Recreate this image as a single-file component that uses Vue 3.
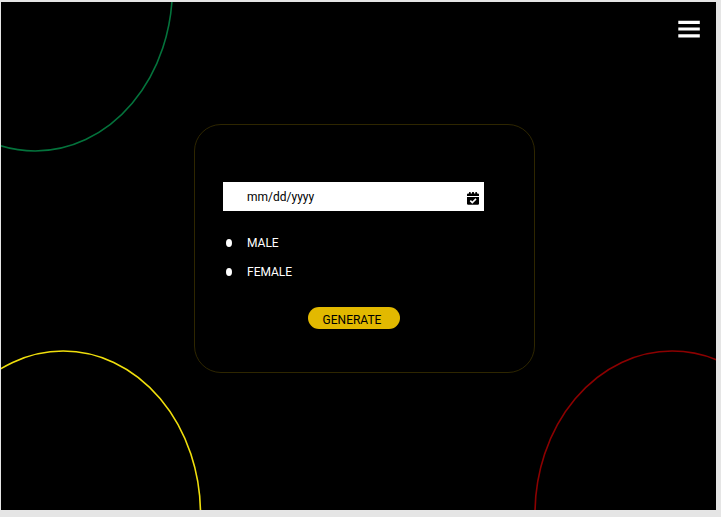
<script setup>
import { ref } from 'vue'

const birthDate = ref('')
const gender = ref('')
</script>

<template>
  <div class="page">
    <div class="stage">
      <svg class="ring ring-green" viewBox="0 0 173 150" aria-hidden="true">
        <ellipse cx="34.2" cy="-14" rx="137.2" ry="163" />
      </svg>
      <svg class="ring ring-yellow" viewBox="0 0 201 160" aria-hidden="true">
        <ellipse cx="62.2" cy="164" rx="137.3" ry="163" />
      </svg>
      <svg class="ring ring-red" viewBox="0 0 182 160" aria-hidden="true">
        <ellipse cx="138.2" cy="164" rx="137.2" ry="163" />
      </svg>

      <header class="topbar">
        <button class="menu" type="button" aria-label="Menu">
          <svg viewBox="0 0 22 18" aria-hidden="true">
            <path d="M.3 2.400h21.500M.3 9h21.500M.3 15.800h21.500" />
          </svg>
        </button>
      </header>

      <main class="content">
        <form class="card" @submit.prevent>
          <div class="date-field">
            <input v-model="birthDate" type="text" placeholder="mm/dd/yyyy" aria-label="Date of birth" />
            <button class="picker" type="button" aria-label="Choose date">
              <svg viewBox="0 0 12 13" aria-hidden="true">
                <path d="M2 1.4V.6Q2 0 2.600 0h.5q.6 0 .6.6v.8H5V.6Q5 0 5.600 0h.8Q7 0 7 .6v.8h1.300V.6q0-.6.6-.6h.5q.6 0 .6.6v.8h.8q1.200 0 1.200 1.200v1.500H0V2.600q0-1.200 1.200-1.200z" />
                <path d="M0 5h12v6.600q0 1.200-1.200 1.200H1.200Q0 12.800 0 11.600z" />
                <path class="tick" d="M3.300 8.600l2 2 3.700-3.700" />
              </svg>
            </button>
          </div>
          <div class="options">
            <label><input v-model="gender" type="radio" name="gender" value="male" />MALE</label>
            <label><input v-model="gender" type="radio" name="gender" value="female" />FEMALE</label>
          </div>
          <button class="generate" type="submit">GENERATE</button>
        </form>
      </main>
    </div>
  </div>
</template>

<style>
body {
  margin: 0;
  background: #e5e5e5;
}
</style>

<style scoped>
.page {
  box-sizing: border-box;
  display: flex;
  min-height: 100vh;
  padding: 2px 5px 7px 1px;
  background: #e5e5e5;
  font-family: Roboto, "Liberation Sans", sans-serif;
  font-size: 12px;
  line-height: 16px;
}

.stage {
  position: relative;
  flex: 1;
  overflow: hidden;
  background: #000;
}

.ring {
  position: absolute;
  fill: none;
  stroke-width: 1.6;
}

.ring-green {
  top: 0;
  left: 0;
  width: 173px;
  stroke: #04733c;
}

.ring-yellow {
  bottom: 0;
  left: 0;
  width: 201px;
  stroke: #f0df0c;
}

.ring-red {
  right: 0;
  bottom: 0;
  width: 182px;
  stroke: #8c0000;
}

button {
  padding: 0;
  border: 0;
  background: none;
  font: inherit;
  cursor: pointer;
}

.topbar {
  position: relative;
  display: flex;
  justify-content: flex-end;
  padding: 18px 16px 0;
}

.menu svg {
  display: block;
  width: 22px;
  height: 18px;
  stroke: #fff;
  stroke-width: 3.2;
}

.content {
  position: relative;
  display: flex;
  justify-content: center;
  padding: 86px 0 24px 12px;
}

.card {
  box-sizing: border-box;
  display: flex;
  flex-direction: column;
  width: 100%;
  max-width: 341px;
  padding: 57px 50px 43px 28px;
  border: 1px solid #2e2600;
  border-radius: 27px;
}

.date-field {
  display: flex;
  align-items: center;
  height: 29px;
  padding: 0 5px 0 24px;
  background: #fff;
}

.date-field input {
  flex: 1;
  min-width: 0;
  padding: 0;
  border: 0;
  outline: 0;
  background: none;
  color: #000;
  font: inherit;
}

.date-field input::placeholder {
  color: #000;
  opacity: 1;
}

.picker {
  padding-top: 3px;
}

.picker svg {
  display: block;
  width: 12px;
  height: 13px;
}

.tick {
  fill: none;
  stroke: #fff;
  stroke-width: 1.6;
}

.options {
  display: flex;
  flex-direction: column;
  padding: 17px 0 21px 3px;
}

.options label {
  display: flex;
  align-items: center;
  gap: 15px;
  height: 29px;
  color: #fff;
}

.options input {
  appearance: none;
  width: 6px;
  height: 8px;
  margin: 0;
  border-radius: 50%;
  background: #fff;
}

.generate {
  align-self: center;
  width: 92px;
  height: 22px;
  padding: 3px 3px 0 0;
  border-radius: 11px;
  background: #e2b900;
  color: #000;
}
</style>
